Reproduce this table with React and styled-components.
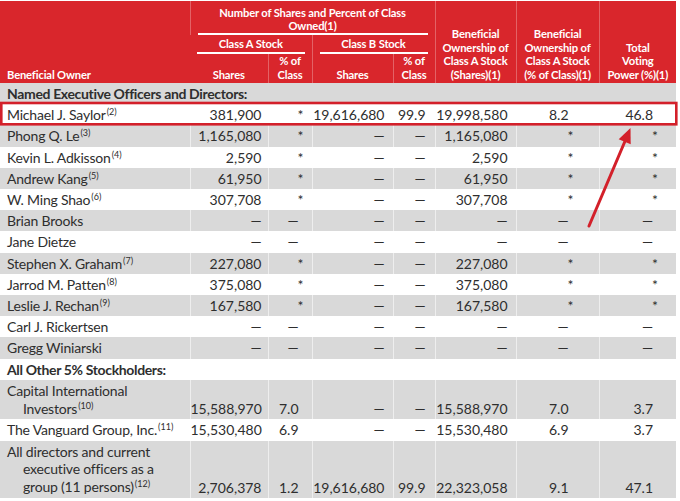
import styled, { createGlobalStyle } from "styled-components";

const GlobalStyle = createGlobalStyle`
  html, body {
    margin: 0;
    padding: 0;
    background: #ffffff;
  }
  body {
    font-family: Lato, "Open Sans", sans-serif;
  }
`;

const RED = "#d9262c";
const GRAY = "#d9d9d9";

const Page = styled.div`
  position: relative;
  width: 680px;
  height: 501px;
  padding-top: 1px;
  box-sizing: border-box;
  overflow: hidden;
`;

const Table = styled.table`
  width: 676px;
  table-layout: fixed;
  border-collapse: collapse;
  border-spacing: 0;
`;

const HeadCell = styled.th`
  background: ${RED};
  color: #ffffff;
  font-family: Lato, sans-serif;
  font-weight: 700;
  font-size: 11.2px;
  letter-spacing: -0.15px;
  line-height: 13.4px;
  text-align: ${(p) => p.$align || "center"};
  vertical-align: bottom;
  padding: ${(p) => p.$pad || "0 4px 2px"};
  border-left: 1px solid rgba(255, 255, 255, 0.28);
  &:first-child {
    border-left: none;
  }
`;

const Underlined = styled.div`
  border-bottom: 2px solid #ffffff;
  margin: 0 3px;
  padding-bottom: ${(p) => p.$gap || "1px"};
  line-height: 13px;
`;

const Row = styled.tr`
  background: ${(p) => (p.$shade ? GRAY : "#ffffff")};
`;

const NameCell = styled.td`
  font-size: 14px;
  letter-spacing: ${(p) => (p.$bold ? "-0.35px" : "-0.2px")};
  line-height: 17.2px;
  color: #2e2e2e;
  font-weight: ${(p) => (p.$bold ? 700 : 400)};
  padding: 2px 0 2px 7px;
  white-space: nowrap;
  vertical-align: bottom;
`;

const NameLine = styled.span`
  display: block;
  line-height: ${(p) => (p.$multi ? "17.8px" : "17.2px")};
  padding-left: ${(p) => (p.$indent ? "16px" : "0")};
`;

const Cell = styled.td`
  font-size: 14px;
  line-height: 17.2px;
  color: #2e2e2e;
  text-align: right;
  vertical-align: bottom;
  white-space: nowrap;
  padding: 2px ${(p) => p.$pr}px 2px 0;
  border-left: 1px solid rgba(255, 255, 255, 0.55);
`;

const Sup = styled.sup`
  font-size: 9px;
  letter-spacing: 0;
  line-height: 0;
  vertical-align: 5px;
  margin-left: 1px;
`;

const Star = styled.span`
  display: inline-block;
  margin-right: -5px;
`;

const Overlay = styled.svg`
  position: absolute;
  left: 0;
  top: 0;
  pointer-events: none;
`;

const pads = [6, 13, 8, 9, 8, 30, 23];
const widths = [190, 78, 44, 81, 42, 81, 83, 77];
const D = "—";
const dashes = [D, D, D, D, D, D, D];

const officers = [
  { name: ["Michael J. Saylor"], sup: "(2)", v: ["381,900", "*", "19,616,680", "99.9", "19,998,580", "8.2", "46.8"] },
  { name: ["Phong Q. Le"], sup: "(3)", v: ["1,165,080", "*", D, D, "1,165,080", "*", "*"] },
  { name: ["Kevin L. Adkisson"], sup: "(4)", v: ["2,590", "*", D, D, "2,590", "*", "*"] },
  { name: ["Andrew Kang"], sup: "(5)", v: ["61,950", "*", D, D, "61,950", "*", "*"] },
  { name: ["W. Ming Shao"], sup: "(6)", v: ["307,708", "*", D, D, "307,708", "*", "*"] },
  { name: ["Brian Brooks"], v: dashes },
  { name: ["Jane Dietze"], v: dashes },
  { name: ["Stephen X. Graham"], sup: "(7)", v: ["227,080", "*", D, D, "227,080", "*", "*"] },
  { name: ["Jarrod M. Patten"], sup: "(8)", v: ["375,080", "*", D, D, "375,080", "*", "*"] },
  { name: ["Leslie J. Rechan"], sup: "(9)", v: ["167,580", "*", D, D, "167,580", "*", "*"] },
  { name: ["Carl J. Rickertsen"], v: dashes },
  { name: ["Gregg Winiarski"], v: dashes },
];

const others = [
  { name: ["Capital International", "Investors"], sup: "(10)", v: ["15,588,970", "7.0", D, D, "15,588,970", "7.0", "3.7"] },
  { name: ["The Vanguard Group, Inc."], sup: "(11)", v: ["15,530,480", "6.9", D, D, "15,530,480", "6.9", "3.7"] },
  {
    name: ["All directors and current", "executive officers as a", "group (11 persons)"],
    sup: "(12)",
    v: ["2,706,378", "1.2", "19,616,680", "99.9", "22,323,058", "9.1", "47.1"],
  },
];

const DataRow = ({ row, shade }) => {
  const multi = row.name.length > 1;
  return (
    <Row $shade={shade}>
      <NameCell>
        {row.name.map((line, i) => (
          <NameLine key={i} $indent={i > 0} $multi={multi}>
            {line}
            {i === row.name.length - 1 && row.sup ? <Sup>{row.sup}</Sup> : null}
          </NameLine>
        ))}
      </NameCell>
      {row.v.map((val, i) => (
        <Cell key={i} $pr={pads[i]}>
          {val === "*" ? <Star>*</Star> : val}
        </Cell>
      ))}
    </Row>
  );
};

const SectionRow = ({ title, shade }) => (
  <Row $shade={shade}>
    <NameCell $bold colSpan={8}>
      {title}
    </NameCell>
  </Row>
);

export default function App() {
  return (
    <Page>
      <GlobalStyle />
      <Table>
        <colgroup>
          {widths.map((w, i) => (
            <col key={i} style={{ width: w }} />
          ))}
        </colgroup>
        <thead>
          <tr style={{ height: 34 }}>
            <HeadCell rowSpan={3} $align="left" $pad="0 4px 2px 7px">
              Beneficial Owner
            </HeadCell>
            <HeadCell colSpan={4} $pad="5px 4px 0">
              <Underlined $gap="1px">
                Number of Shares and Percent of Class
                <br />
                Owned(1)
              </Underlined>
            </HeadCell>
            <HeadCell rowSpan={3}>
              Beneficial
              <br />
              Ownership of
              <br />
              Class A Stock
              <br />
              (Shares)(1)
            </HeadCell>
            <HeadCell rowSpan={3}>
              Beneficial
              <br />
              Ownership of
              <br />
              Class A Stock
              <br />
              (% of Class)(1)
            </HeadCell>
            <HeadCell rowSpan={3}>
              Total
              <br />
              Voting
              <br />
              Power (%)(1)
            </HeadCell>
          </tr>
          <tr style={{ height: 19 }}>
            <HeadCell colSpan={2} $pad="2px 4px 0">
              <Underlined $gap="2px">Class A Stock</Underlined>
            </HeadCell>
            <HeadCell colSpan={2} $pad="2px 4px 0">
              <Underlined $gap="2px">Class B Stock</Underlined>
            </HeadCell>
          </tr>
          <tr style={{ height: 29 }}>
            <HeadCell $pad="0 2px 2px">Shares</HeadCell>
            <HeadCell $pad="0 2px 2px">
              % of
              <br />
              Class
            </HeadCell>
            <HeadCell $pad="0 2px 2px">Shares</HeadCell>
            <HeadCell $pad="0 2px 2px">
              % of
              <br />
              Class
            </HeadCell>
          </tr>
        </thead>
        <tbody>
          <SectionRow title="Named Executive Officers and Directors:" shade />
          {officers.map((r, i) => (
            <DataRow key={r.name[0]} row={r} shade={i % 2 === 1} />
          ))}
          <SectionRow title="All Other 5% Stockholders:" />
          {others.map((r, i) => (
            <DataRow key={r.name[0]} row={r} shade={i % 2 === 0} />
          ))}
        </tbody>
      </Table>
      <Overlay width="680" height="501" viewBox="0 0 680 501">
        <rect x="1.3" y="103" width="675" height="21.3" fill="none" stroke="#d3202a" strokeWidth="2.6" />
        <line x1="589" y1="226" x2="625.5" y2="140" stroke="#d3202a" strokeWidth="3" strokeLinecap="round" />
        <polygon points="630.5,128 618.7,139.3 630.7,144.3" fill="#d3202a" />
      </Overlay>
    </Page>
  );
}
